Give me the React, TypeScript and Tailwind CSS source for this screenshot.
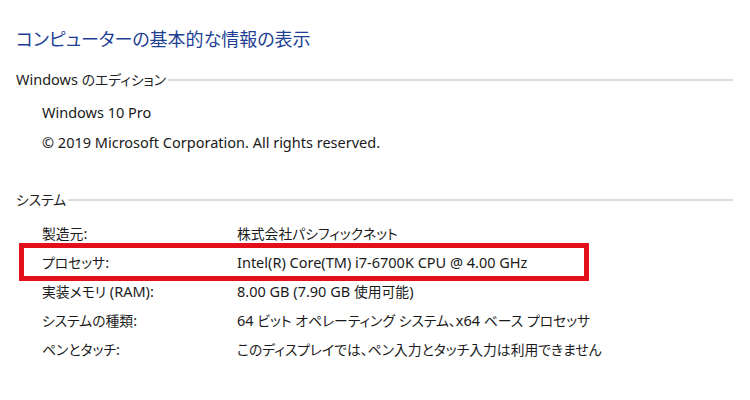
const font = { fontFamily: '"Noto Sans", "Noto Sans CJK JP", sans-serif', fontFeatureSettings: '"palt"' };

const rows: { label: string; value: string; mark?: boolean }[] = [
  { label: '製造元:', value: '株式会社パシフィックネット' },
  { label: 'プロセッサ:', value: 'Intel(R) Core(TM) i7-6700K CPU @ 4.00 GHz', mark: true },
  { label: '実装メモリ (RAM):', value: '8.00 GB (7.90 GB 使用可能)' },
  { label: 'システムの種類:', value: '64 ビット オペレーティング システム、x64 ベース プロセッサ' },
  { label: 'ペンとタッチ:', value: 'このディスプレイでは、ペン入力とタッチ入力は利用できません' },
];

// Japanese runs are set a bit smaller so kana widths come closer to the UI font
function Mixed({ text }: { text: string }) {
  const parts = text.split(/([\u3000-\u30ff\u4e00-\u9fff\uff00-\uffef]+)/);
  return (
    <>
      {parts.map((p, i) =>
        i % 2 ? (
          <span key={i} className="text-[13.8px]">{p}</span>
        ) : (
          p
        ),
      )}
    </>
  );
}

function Section({ title }: { title: string }) {
  return (
    <div className="flex items-center h-[22px] pr-[17px]">
      <span className="text-[14.5px] text-[#222] whitespace-nowrap"><Mixed text={title} /></span>
      <div className="flex-1 h-[2px] bg-[#dcdcdc] ml-[2px]" />
    </div>
  );
}

export default function App() {
  return (
    <div className="w-[750px] h-[400px] bg-white overflow-hidden" style={font}>
      <div className="pl-[16px] pt-[26px]">
        <h1 className="text-[18px] leading-[26px] text-[#1e3f94]">コンピューターの基本的な情報の表示</h1>

        <div className="mt-[17px]">
          <Section title="Windows のエディション" />
          <div className="pl-[26px] text-[14.5px] text-[#1a1a1a]">
            <div className="h-[30px] leading-[30px] mt-[6px]">Windows 10 Pro</div>
            <div className="h-[30px] leading-[30px]">© 2019 Microsoft Corporation. All rights reserved.</div>
          </div>
        </div>

        <div className="mt-[32px]">
          <Section title="システム" />
          <div className="mt-[8px] text-[14.5px] text-[#1a1a1a]">
            {rows.map((r) => (
              <div key={r.label} className="relative flex h-[29px] items-center pl-[26px]">
                <span className="w-[195px] shrink-0"><Mixed text={r.label} /></span>
                <span className="whitespace-nowrap"><Mixed text={r.value} /></span>
                {r.mark && (
                  <span className="absolute left-[3px] top-[-5px] w-[570px] h-[38px] border-[5px] border-[#e3101c]" />
                )}
              </div>
            ))}
          </div>
        </div>
      </div>
    </div>
  );
}
